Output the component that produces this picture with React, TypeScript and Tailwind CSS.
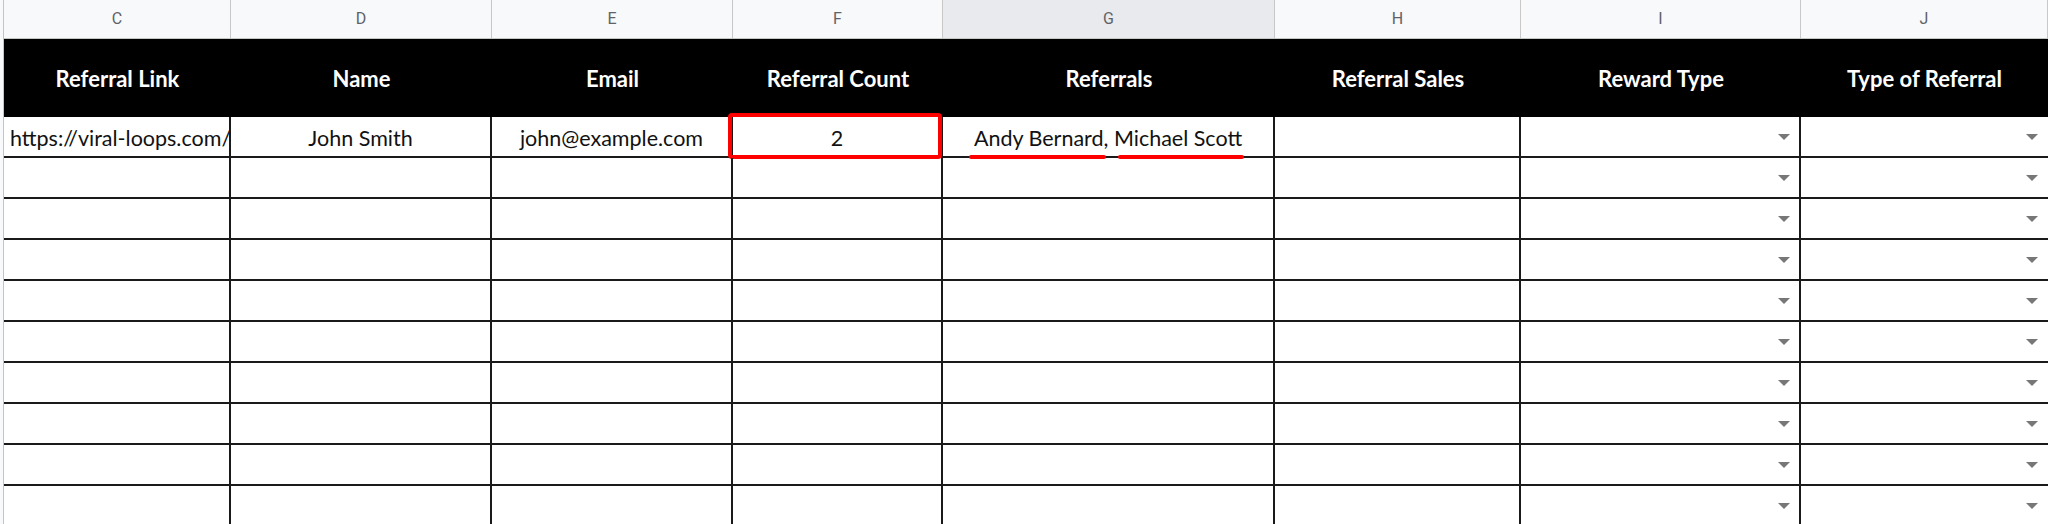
const cols = [
  { key: 'C', title: 'Referral Link', w: 'w-[227px]', head: 'bg-[#f8f9fa]' },
  { key: 'D', title: 'Name', w: 'w-[261px]', head: 'bg-[#f8f9fa]' },
  { key: 'E', title: 'Email', w: 'w-[241px]', head: 'bg-[#f8f9fa]' },
  { key: 'F', title: 'Referral Count', w: 'w-[210px]', head: 'bg-[#f8f9fa]' },
  { key: 'G', title: 'Referrals', w: 'w-[332px]', head: 'bg-[#e8eaed]' },
  { key: 'H', title: 'Referral Sales', w: 'w-[246px]', head: 'bg-[#f8f9fa]' },
  { key: 'I', title: 'Reward Type', w: 'w-[280px]', head: 'bg-[#f8f9fa]' },
  { key: 'J', title: 'Type of Referral', w: 'w-[247px]', head: 'bg-[#f8f9fa]' },
];

const Arrow = ({ right }: { right: string }) => (
  <svg width="12" height="6" viewBox="0 0 12 6" className={`absolute ${right} top-[17px]`}>
    <polygon points="0,0 12,0 6,6" fill="#777777" />
  </svg>
);

const Strip = ({ h }: { h: string }) => (
  <div className={`${h} w-[4px] shrink-0 bg-[#f8f9fa] border-r border-[#c4c4c4]`} />
);

const DataRow = ({ first }: { first?: boolean }) => (
  <div className="flex h-[41px]">
    <Strip h="h-[41px]" />
    {cols.map((c, i) => {
      const last = i === cols.length - 1;
      return (
        <div
          key={c.key}
          className={`${c.w} relative shrink-0 h-[41px] pt-[3px] border-b-2 border-[#1a1a1a] ${last ? '' : 'border-r-2'} flex items-center justify-center text-[21.5px] text-[#111]`}
        >
          {first && c.key === 'C' && (
            <span className="w-[219px] ml-[6px] self-center whitespace-nowrap overflow-hidden">https://viral-loops.com/</span>
          )}
          {first && c.key === 'D' && <span>John Smith</span>}
          {first && c.key === 'E' && <span>john@example.com</span>}
          {first && c.key === 'F' && (
            <>
              <span>2</span>
              <div className="absolute left-[-5px] top-[-4px] w-[214px] h-[46px] border-[4px] border-[#ff0000] rounded-[4px]" />
            </>
          )}
          {first && c.key === 'G' && (
            <>
              <span>Andy Bernard, Michael Scott</span>
              <div className="absolute left-[26px] top-[38px] w-[137px] h-[4px] rounded-full bg-[#ff0000]" />
              <div className="absolute left-[175px] top-[38px] w-[126px] h-[4px] rounded-full bg-[#ff0000]" />
            </>
          )}
          {c.key === 'I' && <Arrow right="right-[9px]" />}
          {c.key === 'J' && <Arrow right="right-[10px]" />}
        </div>
      );
    })}
    <div className="flex-1 h-[41px] border-b-2 border-[#1a1a1a]" />
  </div>
);

export default function App() {
  return (
    <div className="w-[2048px] h-[524px] overflow-hidden bg-white font-['Lato',sans-serif]">
      {/* column letters */}
      <div className="flex h-[39px] border-b border-[#c4c7c5]">
        <Strip h="h-[39px]" />
        {cols.map((c) => (
          <div
            key={c.key}
            className={`${c.w} ${c.head} shrink-0 h-full border-r border-[#c8c8c8] flex items-center justify-center font-['Roboto',sans-serif] text-[16px] text-[#5f6368]`}
          >
            {c.key}
          </div>
        ))}
        <div className="flex-1 bg-[#f8f9fa]" />
      </div>

      {/* black header */}
      <div className="flex h-[78px]">
        <Strip h="h-[78px]" />
        {cols.map((c) => (
          <div key={c.key} className={`${c.w} shrink-0 bg-black flex items-center justify-center text-white font-bold text-[22px]`}>
            {c.title}
          </div>
        ))}
        <div className="flex-1 bg-black" />
      </div>

      <DataRow first />
      {Array.from({ length: 9 }).map((_, i) => (
        <DataRow key={i} />
      ))}
    </div>
  );
}
